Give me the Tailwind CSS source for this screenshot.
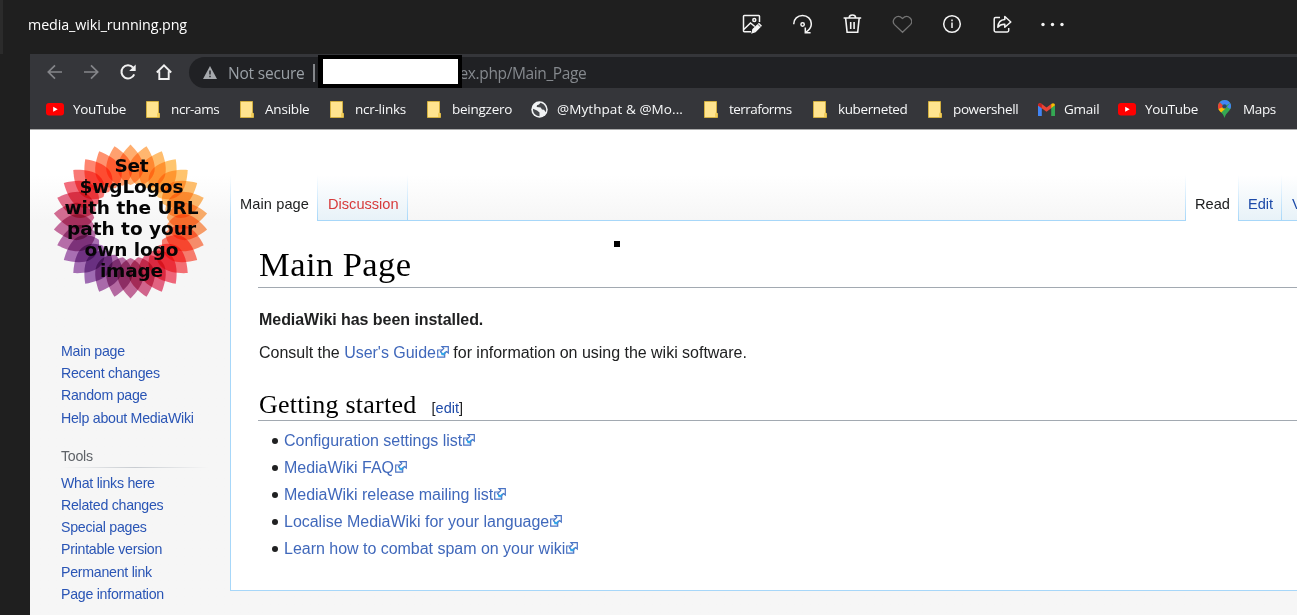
<!DOCTYPE html>
<html lang="en">
<head>
<meta charset="utf-8">
<title>media_wiki_running.png</title>
<script src="https://cdn.jsdelivr.net/npm/@tailwindcss/browser@4"></script>
</head>
<body class="w-[1297px] h-[615px] overflow-hidden bg-[#1f1f1f] font-['Liberation_Sans',Arial,sans-serif]">
<svg class="hidden">
  <symbol id="folder" viewBox="0 0 14 17"><path d="M.5.5h12v11l1 .9v4.100H.5z" fill="#ffe48f" stroke="#d9b43c" stroke-width=".9"/><path d="M11.800 11.500c-1 1-1 2.500-.5 4.500h2v-3.500z" fill="#f3cd5a"/></symbol>
  <symbol id="yt" viewBox="0 0 18 13"><rect width="18" height="12.500" rx="3" fill="#f00"/><path d="M7.200 3.700v5l4.500-2.500z" fill="#fff"/></symbol>
  <symbol id="ext" viewBox="0 0 12 12"><path fill="#fff" stroke="#4a73c4" stroke-width="1.200" d="M.7 4h7v7.200h-7z"/><path fill="#fff" stroke="#4a73c4" stroke-width="1.200" d="M5 .7h6.300V7L9.600 5.500 6.500 8.600 3.500 5.800l3.200-3.200z"/><path d="M3.600 6l2.500 1.300L9 4.800 7.200 9.200H4.500z" fill="#2fa8ea"/></symbol>
</svg>

<header class="flex h-[54px] items-center border-l-[3px] border-[#2b2b2b]">
  <h1 class="ml-[25px] w-[714px] pb-[4px] font-['Open_Sans',sans-serif] text-[14.300px] leading-5 tracking-[-0.100px] text-white">media_wiki_running.png</h1>
  <div class="-mt-[6px] grid grid-cols-[50px_50px_50px_50px_50px_48px_26px] text-[#f4f4f4]">
    <svg class="size-5" viewBox="0 0 20 20" fill="none" stroke="currentColor" stroke-width="1.500"><path d="M9 17.800H2.300a.8.8 0 0 1-.8-.8V2.300c0-.5.300-.8.800-.8h14.400c.5 0 .8.300.8.800V8M1.800 15.500 8.500 9l4.300 3.500"/><circle cx="12.300" cy="6" r="1.500"/><path d="m10 18.800 1-3.500 6-5.800 2.200 2.200-5.900 6z" fill="currentColor" stroke-width="1.200"/><path d="m16 10.300 2.300 2.400" stroke="#1f1f1f" stroke-width=".8"/></svg>
    <svg class="size-5" viewBox="0 0 20 20" fill="none" stroke="currentColor" stroke-width="1.500"><path d="M1.800 10.200C1.600 5 5.700 1.500 10.500 1.500c5 0 8.800 3.600 8.800 8.500 0 3.300-2 6-5.300 8.200"/><path d="M13.300 13.500v5.300h5.300"/><circle cx="10.600" cy="10.500" r="1.700"/></svg>
    <svg class="size-5" viewBox="0 0 20 20" fill="none" stroke="currentColor" stroke-width="1.600"><path d="M1.600 4h17.600M3.600 4l1.500 14.300h10.600L17.200 4M7.200 3.500c.3-3.300 6.100-3.300 6.400 0M8.700 8v7M12.100 8v7"/></svg>
    <svg class="size-5 text-[#747474]" viewBox="0 0 20 20" fill="none" stroke="currentColor" stroke-width="1.300"><path d="M10.500 18.300 2.500 10.600C-1.500 6.500 4.900-.8 10.500 4.400c5.600-5.200 12 2.100 8 6.200z"/></svg>
    <svg class="size-5" viewBox="0 0 20 20" fill="none" stroke="currentColor" stroke-width="1.500"><circle cx="10" cy="10" r="8.300"/><path d="M10 8.600V14M10 5.500v1.800"/></svg>
    <svg class="size-5" viewBox="0 0 20 20" fill="none" stroke="currentColor" stroke-width="1.500" stroke-linejoin="round"><path d="M8 3.500H3.600c-.8 0-1.400.6-1.400 1.400v11.700c0 .8.600 1.400 1.400 1.400h11.700c.8 0 1.400-.6 1.400-1.400V14"/><path d="M12.800 2.500 18.800 8l-6 5.300v-3.100c-3-.2-5 .5-7 3 .3-4.500 2.500-7.400 7-7.700z"/></svg>
    <svg class="h-5 w-[26px]" viewBox="0 0 26 20" fill="currentColor"><circle cx="3" cy="10.500" r="1.700"/><circle cx="12.500" cy="10.500" r="1.700"/><circle cx="22" cy="10.500" r="1.700"/></svg>
  </div>
</header>

<main class="ml-[30px] h-[561px] w-[1267px] overflow-hidden bg-[#f6f6f6]">
  <div class="flex h-[35px] items-center bg-[#35363a] font-['Open_Sans',sans-serif]">
    <div class="ml-[16px] mr-[16px] flex w-[127px] justify-between">
      <svg class="size-[18px]" viewBox="0 0 18 18" fill="none" stroke="#85868a" stroke-width="1.700"><path d="M16 9H2.500M9 2.300 2.300 9 9 15.700"/></svg>
      <svg class="size-[18px]" viewBox="0 0 18 18" fill="none" stroke="#85868a" stroke-width="1.700"><path d="M2 9h13.500M9 2.300 15.700 9 9 15.700"/></svg>
      <svg class="size-[18px]" viewBox="0 0 18 18" fill="none" stroke="#f1f1f1" stroke-width="2"><path d="M15.200 11.300A6.600 6.600 0 1 1 14 4.500"/><path d="M16.700 1.500v6.500h-6.500z" fill="#f1f1f1" stroke="none"/></svg>
      <svg class="size-[18px]" viewBox="0 0 18 18" fill="none" stroke="#f1f1f1" stroke-width="1.900"><path d="M1.800 9.500 9 2.300l7.200 7.200M4.300 8.300V16h9.400V8.300"/></svg>
    </div>
    <div class="mt-[2px] flex h-[31px] flex-1 items-center rounded-l-full bg-[#202124] pl-[14px] text-[15.500px] tracking-[-0.200px] text-[#9aa0a6]">
      <svg class="mr-[11px] h-[13px] w-[14px]" viewBox="0 0 14 13"><path d="M7 0l7 13H0z" fill="#a6a9ad"/><path d="M7 4.500v4M7 9.700v1.500" stroke="#202124" stroke-width="1.400"/></svg>
      <span class="w-[85px] pt-[2px] whitespace-nowrap">Not secure</span>
      <i class="mr-[3px] h-[18px] w-[1.500px] bg-[#85878b]"></i>
      <b class="relative z-10 -mt-[2px] h-[33px] w-[144px] border-[4px] border-l-[5px] border-black bg-white"></b>
      <span class="-ml-[2px] pt-[2px] tracking-[-0.370px] text-[#85898e]">ex.php/Main_Page</span>
    </div>
  </div>

  <nav class="grid h-[41px] grid-cols-[100px_94px_90px_97px_104px_173px_109px_115px_110px_80px_100px_90px] items-center border-b border-[#aaa] bg-[#35363a] pl-[16px] font-['Open_Sans',sans-serif] text-[13.500px] tracking-[-0.380px] whitespace-nowrap text-[#f8f9fa] [&>span]:flex [&>span]:items-center">
    <span><svg class="mr-[9px] h-[13px] w-[18px]"><use href="#yt"/></svg>YouTube</span>
    <span><svg class="mr-[11px] h-[17px] w-[14px]"><use href="#folder"/></svg>ncr-ams</span>
    <span class="tracking-[-0.200px]"><svg class="mr-[11px] h-[17px] w-[14px]"><use href="#folder"/></svg>Ansible</span>
    <span class="tracking-[-0.250px]"><svg class="mr-[11px] h-[17px] w-[14px]"><use href="#folder"/></svg>ncr-links</span>
    <span class="tracking-[-0.250px]"><svg class="mr-[11px] h-[17px] w-[14px]"><use href="#folder"/></svg>beingzero</span>
    <span class="tracking-[0.080px]"><svg class="mr-[9px] size-[17px]" viewBox="0 0 17 17"><circle cx="8.500" cy="8.500" r="8.200" fill="#f1f3f4"/><path d="M2 7.800 6 9.500l2.500 2v3.700C4.500 15 1.700 12 2 7.800zM9.500 1.800 8 3.500 6 4.200 5.700 6l4 .5L11 8.500l2 .3 1.800 2.500c1.300-3.800-.5-8-5.300-9.500z" fill="#45474b"/></svg>@Mythpat &amp; @Mo...</span>
    <span class="tracking-[-0.550px]"><svg class="mr-[11px] h-[17px] w-[14px]"><use href="#folder"/></svg>terraforms</span>
    <span><svg class="mr-[11px] h-[17px] w-[14px]"><use href="#folder"/></svg>kuberneted</span>
    <span><svg class="mr-[11px] h-[17px] w-[14px]"><use href="#folder"/></svg>powershell</span>
    <span class="tracking-[-0.250px]"><svg class="mr-[9px] h-[13px] w-[17px]" viewBox="0 0 17 13"><path d="M0 2v11h3.800V5z" fill="#4285f4"/><path d="M17 2v11h-3.800V5z" fill="#34a853"/><path d="M0 2C0 .3 2 -.5 3.500.7l5 3.800 4.700-3.600V5.200L8.500 8.800 0 2.500z" fill="#ea4335"/><path d="M13.200.9C15-.5 17 .3 17 2.300l-3.800 2.900z" fill="#fbbc04"/><path d="M0 2.200 3.800 5v-4C2-.5 0 .3 0 2.200z" fill="#c5221f"/></svg>Gmail</span>
    <span><svg class="mr-[9px] h-[13px] w-[18px]"><use href="#yt"/></svg>YouTube</span>
    <span><svg class="mr-[12px] h-[18px] w-[13px]" viewBox="0 0 13 18"><path d="M6.500 0C2.800 0 0 2.900 0 6.400 0 10.700 5 12 6.500 18 8 12 13 10.700 13 6.400 13 2.900 10.200 0 6.500 0z" fill="#34a853"/><path d="M6.500 6.500 1.700 2.300A6.400 6.400 0 0 0 1 10z" fill="#ea4335"/><path d="M6.500 6.500.5 9c.5 1.400 1.600 2.500 2.700 3.600L9 7z" fill="#fbbc04"/><path d="M6.500 6.500 1.700 2.300C4.500-.9 10-.7 12.100 3z" fill="#4285f4"/><path d="m9 7 3.100-4c1.200 2 1.200 4 .1 6z" fill="#4285f4"/><circle cx="6.500" cy="6.400" r="2.200" fill="#26486b"/></svg>Maps</span>
  </nav>

  <div class="flex h-[485px] bg-linear-to-b from-white from-[45px] to-[#f6f6f6] to-[91px]">
    <aside class="w-[200px] shrink-0 text-[14.200px] tracking-[-0.270px] text-[#2a55b5]">
      <svg class="block h-[184px] w-[200px]" viewBox="0 0 200 184" role="img">
        <g id="petals" transform="translate(100.500 91.500)" class="[&_path]:mix-blend-multiply"></g>
        <g class="font-['DejaVu_Sans',sans-serif] text-[18.500px] font-bold tracking-normal" text-anchor="middle" fill="#050505">
          <text x="101.500" y="41.500" textLength="34">Set</text><text x="101.500" y="62.500" textLength="104">$wgLogos</text><text x="101.500" y="83.500" textLength="134">with the URL</text><text x="101.500" y="104.500" textLength="129">path to your</text><text x="101.500" y="125.500" textLength="94">own logo</text><text x="101.500" y="146.500" textLength="63">image</text>
        </g>
      </svg>
      <ul class="mt-[26px] pl-[31px] leading-[22.200px]"><li>Main page</li><li>Recent changes</li><li>Random page</li><li>Help about MediaWiki</li></ul>
      <h3 class="mt-[17px] pl-[31px] leading-[20px] text-[#5f6368]">Tools</h3>
      <div class="mt-px ml-[31px] h-px w-[148px] bg-linear-to-r from-transparent via-[#c8ccd1] to-transparent"></div>
      <ul class="mt-[4px] pl-[31px] leading-[22.200px]"><li>What links here</li><li>Related changes</li><li>Special pages</li><li>Printable version</li><li>Permanent link</li><li>Page information</li></ul>
    </aside>
    <section class="flex-1">
      <div class="flex h-[90px] items-end text-[14.600px] leading-[33px] whitespace-nowrap text-[#202122]">
        <div class="h-[45px] w-px bg-linear-to-b from-white to-[#a7d7f9]"></div>
        <div class="h-[45px] w-[86px] bg-white pt-[13px] pl-[9px] tracking-[0.100px]">Main page</div>
        <div class="h-[45px] w-px bg-linear-to-b from-white to-[#a7d7f9]"></div>
        <div class="h-[45px] w-[89px] bg-linear-to-b from-white to-[#e8f2f8] pt-[13px] pl-[10px] text-[#d73a3a]">Discussion</div>
        <div class="h-[45px] w-px bg-linear-to-b from-white to-[#a7d7f9]"></div>
        <div class="w-[777px]"></div>
        <div class="h-[45px] w-px bg-linear-to-b from-white to-[#a7d7f9]"></div>
        <div class="h-[45px] w-[52px] bg-white pt-[13px] pl-[9px]">Read</div>
        <div class="h-[45px] w-px bg-linear-to-b from-white to-[#a7d7f9]"></div>
        <div class="h-[45px] w-[42px] bg-linear-to-b from-white to-[#e8f2f8] pt-[13px] pl-[9px] text-[#1d4aa8]">Edit</div>
        <div class="h-[45px] w-px bg-linear-to-b from-white to-[#a7d7f9]"></div>
        <div class="h-[45px] w-[15px] overflow-hidden bg-linear-to-b from-white to-[#e8f2f8] pt-[13px] pl-[10px] text-[#1d4aa8]">V</div>
      </div>
      <article class="h-[371px] border-b border-l border-[#a7d7f9] bg-white text-[16px] tracking-[-0.020px] text-[#202122]">
        <div class="flex h-px"><i class="w-[86px]"></i><i class="w-[869px] bg-[#a7d7f9]"></i><i class="w-[52px]"></i><i class="flex-1 bg-[#a7d7f9]"></i></div>
        <div class="relative pt-[22px] pl-[27px]">
          <span class="absolute top-[20px] left-[383px] size-[6px] bg-black"></span>
          <h2 class="h-[45px] border-b border-[#a2a9b1] pl-px font-['Liberation_Serif',serif] text-[34.500px] leading-[43px] tracking-[0.450px] text-black">Main Page</h2>
          <p class="mt-[22px] pl-px leading-[20px] font-bold tracking-[-0.050px]">MediaWiki has been installed.</p>
          <p class="mt-[13px] pl-px leading-[20px]">Consult the <a class="text-[#4068bb]">User's Guide<svg class="ml-px mb-[3px] inline h-[12px] w-[12px]"><use href="#ext"/></svg></a> for information on using the wiki software.</p>
          <h3 class="mt-[26px] flex h-[32px] items-baseline border-b border-[#a2a9b1] pl-px font-['Liberation_Serif',serif] text-[26px] leading-[32px] tracking-[0.250px] text-black">Getting started<span class="ml-[15px] font-['Liberation_Sans',sans-serif] text-[14.500px] tracking-normal text-[#202122]">[<a class="text-[#1d4aa8]">edit</a>]</span></h3>
          <ul class="mt-[6px] pl-[26px] leading-[27.100px] text-[#4068bb] [&>li]:relative [&>li]:before:absolute [&>li]:before:top-[11px] [&>li]:before:-left-[12px] [&>li]:before:size-[6px] [&>li]:before:rounded-full [&>li]:before:bg-[#202122]">
            <li>Configuration settings list<svg class="ml-px mb-[4px] inline h-[12px] w-[12px]"><use href="#ext"/></svg></li>
            <li>MediaWiki FAQ<svg class="ml-px mb-[4px] inline h-[12px] w-[12px]"><use href="#ext"/></svg></li>
            <li>MediaWiki release mailing list<svg class="ml-px mb-[4px] inline h-[12px] w-[12px]"><use href="#ext"/></svg></li>
            <li>Localise MediaWiki for your language<svg class="ml-px mb-[4px] inline h-[12px] w-[12px]"><use href="#ext"/></svg></li>
            <li>Learn how to combat spam on your wiki<svg class="ml-px mb-[4px] inline h-[12px] w-[12px]"><use href="#ext"/></svg></li>
          </ul>
        </div>
      </article>
    </section>
  </div>
</main>
<script>
  // Sunflower ring: 30 translucent petals whose overlaps deepen towards the middle.
  const stops = [[0,255,140,50],[40,255,176,50],[75,255,155,45],[95,255,125,45],[125,255,62,55],[150,240,35,75],[180,175,45,115],[215,125,50,155],[240,140,55,155],[270,190,50,115],[300,240,48,70],[325,255,82,50],[360,255,140,50]];
  const ns = 'http://www.w3.org/2000/svg', ring = document.getElementById('petals');
  for (let k = 0; k < 30; k++) {
    const a = k * 12, i = stops.findIndex(s => s[0] >= a), q = stops[i], p = stops[Math.max(0, i - 1)];
    const t = q[0] === p[0] ? 0 : (a - p[0]) / (q[0] - p[0]);
    const c = [1, 2, 3].map(j => Math.round(p[j] + (q[j] - p[j]) * t));
    const e = document.createElementNS(ns, 'path');
    e.setAttribute('d', 'M0-77C6-71 13-62 13-54 13-45 6-39 0-36.500-6-39-13-45-13-54-13-62-6-71 0-77z');
    e.setAttribute('transform', `rotate(${a})`);
    e.setAttribute('fill', `rgb(${c})`);
    e.setAttribute('fill-opacity', '.7');
    ring.appendChild(e);
  }
</script>
</body>
</html>
